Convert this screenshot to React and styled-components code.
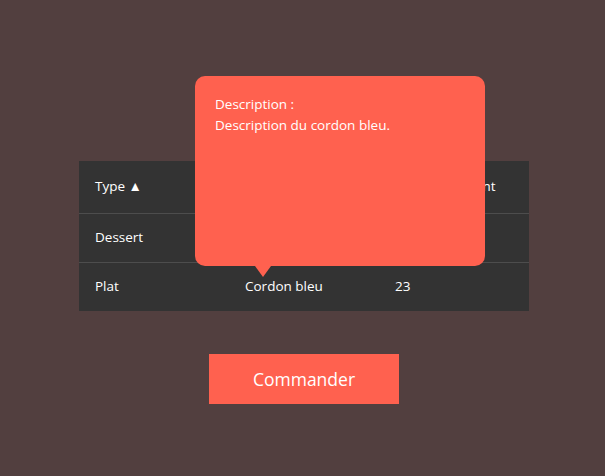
import styled, { createGlobalStyle } from 'styled-components';

const GlobalStyle = createGlobalStyle`
    html, body {
        margin: 0;
        padding: 0;
        background: #523f3f;
        font-family: "Open Sans", "Liberation Sans", sans-serif;
    }
`

const Page = styled.div`
    display: flex;
    flex-direction: column;
    align-items: center;
    padding: 161px 0 0 3px;
    height: 476px;
    box-sizing: border-box;
`

const Table = styled.div`
    width: 450px;
    background: #333333;
    color: #ffffff;
    font-size: 13.5px;
`

const Row = styled.div`
    display: grid;
    grid-template-columns: 150px 150px 150px;
    height: ${({header}) => header ? '52px' : '48px'};
    align-items: center;
    border-top: ${({first}) => first ? 'none' : '1px solid #4d4d4d'};
`

const Cell = styled.div`
    position: relative;
    padding-left: 16px;
    padding-bottom: 2px;
`

const Tooltip = styled.div`
    position: absolute;
    left: -34px;
    bottom: 31px;
    width: 290px;
    height: 190px;
    box-sizing: border-box;
    padding: 18px 20px;
    background: #ff614f;
    border-radius: 10px;
    line-height: 21px;
    font-size: 13.5px;
    color: #ffffff;
    z-index: 2;

    &::after {
        content: '';
        position: absolute;
        left: 60px;
        bottom: -11px;
        border-left: 8px solid transparent;
        border-right: 8px solid transparent;
        border-top: 11px solid #ff614f;
    }
`

const OrderButton = styled.button`
    margin-top: 43px;
    width: 190px;
    height: 50px;
    border: none;
    background: #ff614f;
    color: #ffffff;
    font-family: inherit;
    font-size: 17.5px;
    cursor: pointer;
`

const App = () => {
    return (
        <>
            <GlobalStyle />
            <Page>
                <Table>
                    <Row header first>
                        <Cell>Type ▲</Cell>
                        <Cell>Nom</Cell>
                        <Cell>Nombre restant</Cell>
                    </Row>
                    <Row>
                        <Cell>Dessert</Cell>
                        <Cell>Tarte aux pommes</Cell>
                        <Cell>12</Cell>
                    </Row>
                    <Row>
                        <Cell>Plat</Cell>
                        <Cell>
                            Cordon bleu
                            <Tooltip>
                                Description :<br />
                                Description du cordon bleu.
                            </Tooltip>
                        </Cell>
                        <Cell>23</Cell>
                    </Row>
                </Table>
                <OrderButton>Commander</OrderButton>
            </Page>
        </>
    );
}

export default App;
